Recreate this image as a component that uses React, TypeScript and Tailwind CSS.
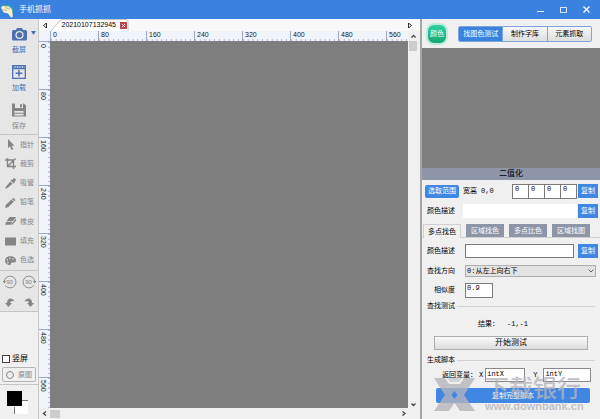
import { clsx } from "clsx";
import type { ReactNode } from "react";

const MARKS = [0, 80, 160, 240, 320, 400, 480, 560];

const TOOLS: { label: string; icon: ReactNode }[] = [
  { label: "指针", icon: <path d="M3 0v9.2l2.1-1.9L6.6 11l1.7-.8-1.6-3.5H9.5z" /> },
  {
    label: "裁剪",
    icon: <path d="M0 2h8.500v9M2.500 0v8.500H11M2.500 8.500 10.500.5" fill="none" stroke="currentColor" strokeWidth="1.400" />,
  },
  { label: "吸管", icon: <path d="M8.4.6a1.5 1.5 0 0 1 2.1 2.1L9.2 4l.5.6-1 1L5.5 2.5l1-1 .6.5zM5.3 3.6l2.3 2.2L2.4 10 .3 11l.8-2.4z" /> },
  { label: "铅笔", icon: <path d="M8.2.8 10.6 3 9.4 4.2 7 1.9zM6.4 2.5 8.8 4.8 3 10.3.2 11 .8 8z" /> },
  { label: "橡皮", icon: <path d="M4.600 1H11L8 5H1.500zM1.200 5.700h6.500L5.800 8.700H0zM11 2.200v2.600L6.700 9.500V7.900z" /> },
  { label: "填充", icon: <path d="M0 1.500h11v8H0z" /> },
  {
    label: "色选",
    icon: (
      <path
        fillRule="evenodd"
        d="M5.5 1.3C2.3 1.3 0 3.200 0 5.700s2.200 4.200 4.800 4.200c1.700 0 .6-1.700 1.900-2.200 1.200-.5 4.300.6 4.300-2.200 0-2.500-2.400-4.200-5.500-4.200zM2.400 4.200a.8.8 0 1 1 0 1.600.8.8 0 0 1 0-1.600zM5 2.500a.8.8 0 1 1 0 1.600.8.8 0 0 1 0-1.600zM8 3.200a.8.8 0 1 1 0 1.600.8.8 0 0 1 0-1.600zM2.900 7a.8.8 0 1 1 0 1.600.8.8 0 0 1 0-1.600z"
      />
    ),
  },
];

const MODES = ["找图色测试", "制作字库", "元素抓取"];
const TABS = ["多点找色", "区域找色", "多点比色", "区域找图"];

const MONO = "font-['Liberation_Mono','Noto_Sans_CJK_SC',monospace]";

function TitleBar() {
  return (
    <header className="flex h-[19px] shrink-0 items-center bg-[#3a82df] text-white">
      <svg className="ml-px h-4 w-3" viewBox="0 0 12 16">
        <path d="M1 3h8l3 3.500V12l-2 2z" fill="#3aa79c" />
        <path d="M0 5.500 1.500 4l6.500.5 3 3 .8 7.500-1.800.5L7 11.500l-4.500-1z" fill="#f7efd0" />
        <path d="M1.500 7.500 6 8.500M4.500 5.500 9 7.500" stroke="#a89a60" strokeWidth=".7" />
      </svg>
      <h1 className="ml-1.5 text-[8px] leading-3">手机抓抓</h1>
      <div className="ml-auto flex items-center gap-4 pr-2.5">
        <button aria-label="最小化" className="flex h-3 w-[7px] items-center">
          <span className="mt-1 h-px w-full bg-white" />
        </button>
        <button aria-label="最大化" className="h-1.5 w-[7px] border border-white/80" />
        <button aria-label="关闭" className="w-[7px]">
          <svg className="size-[7px]" viewBox="0 0 7 7" stroke="white" strokeWidth="1.300">
            <path d="m.5.5 6 6m0-6-6 6" />
          </svg>
        </button>
      </div>
    </header>
  );
}

function Sidebar() {
  return (
    <aside className="flex w-[39px] shrink-0 flex-col border-r border-[#c8c8c8] bg-[#f0f0f0] text-[7px] leading-[10px] text-[#858585]">
      <div className="flex h-[116px] flex-col gap-2.5 border-b border-[#c6c6c6] bg-[#e6e6e6] pt-2">
        <button className="relative flex flex-col items-center gap-1 text-[#4c70b2]">
          <svg className="h-[14px] w-[15px]" viewBox="0 0 15 14" fill="currentColor">
            <path
              fillRule="evenodd"
              d="M5 1h5l1 2h2.500q1.500 0 1.500 1.500V12q0 1.500-1.500 1.500h-12Q0 13.500 0 12V4.500Q0 3 1.500 3H4zM7.500 3.900a4.100 4.100 0 1 0 0 8.200 4.100 4.100 0 0 0 0-8.200zm0 1.300a2.800 2.800 0 1 1 0 5.600 2.800 2.800 0 0 1 0-5.600z"
            />
            <circle cx="7.500" cy="8" r="1.300" />
          </svg>
          截屏
          <svg className="absolute top-1 right-0.5 h-1 w-[5px]" viewBox="0 0 5 4" fill="currentColor">
            <path d="M0 0h5L2.500 4z" />
          </svg>
        </button>
        <button className="flex flex-col items-center gap-1 text-[#4c70b2]">
          <svg className="size-[14px]" viewBox="0 0 14 14" fill="none" stroke="currentColor">
            <path d="M.7.700h12.600v12.600H.7zM.7 3.500h12.600" strokeWidth="1.300" />
            <path d="M1 2h12" strokeWidth="1.500" strokeDasharray="1.500 1" />
            <path d="M7 5v6.500M3.700 8.300h6.600" strokeWidth="1.500" />
          </svg>
          加载
        </button>
        <button className="flex flex-col items-center gap-1">
          <svg className="size-[14px]" viewBox="0 0 14 14" fill="currentColor">
            <path fillRule="evenodd" d="M0 .5h12l2 2v11H0zM3 .5V5h8V.5zM2.500 8v4.500h9V8z" />
            <path d="M8 1.200h2v3H8zM2.500 9.700h9v1h-9z" />
          </svg>
          保存
        </button>
      </div>
      <div className="flex h-[136px] flex-col justify-around border-b border-[#c6c6c6] bg-[#e6e6e6]">
        {TOOLS.map((tool) => (
          <button key={tool.label} className="flex items-center gap-1 pl-[5px]">
            <svg className="size-[11px]" viewBox="0 0 11 11" fill="currentColor">
              {tool.icon}
            </svg>
            {tool.label}
          </button>
        ))}
      </div>
      <div className="grid h-[41px] grid-cols-2 place-items-center border-b border-[#c6c6c6] bg-[#e6e6e6]">
        {[false, true].map((right) => (
          <button
            key={String(right)}
            aria-label={right ? "右转" : "左转"}
            className="relative flex size-[14px] items-center justify-center text-[6px]"
          >
            90
            <svg
              className={clsx("absolute inset-0", right && "-scale-x-100")}
              viewBox="0 0 14 14"
              fill="none"
              stroke="currentColor"
            >
              <path d="M1.200 7A5.900 5.900 0 1 1 2.200 10.300" strokeWidth=".9" />
              <path d="M-.3 6h3.200L1.300 8.800z" fill="currentColor" stroke="none" />
            </svg>
          </button>
        ))}
        {[false, true].map((redo) => (
          <button key={String(redo)} aria-label={redo ? "重做" : "撤销"}>
            <svg
              className={clsx("h-[9px] w-[10px]", redo && "-scale-x-100")}
              viewBox="0 0 10 9"
              fill="currentColor"
            >
              <path d="M0 5 3.500 9 7 5H5Q5 2.500 9.500 3.200 8 .2 5 .5 2 1 2 5z" />
            </svg>
          </button>
        ))}
      </div>
      <div className="mt-auto flex flex-col gap-0.5 px-0.5 pb-0.5">
        <label className="flex items-center gap-0.5 text-[8px] leading-3 text-black">
          <input type="checkbox" className="size-2 appearance-none border border-[#444] bg-white" />
          竖屏
        </label>
        <button className="flex h-[15px] items-center justify-center gap-1 rounded-xs border border-[#b4b4b4]">
          <span className="size-2 rounded-full border border-[#8a8a8a]" />
          原图
        </button>
      </div>
      <div className="h-[35px] border-t border-[#c6c6c6] pt-1.5 pl-[7px]">
        <svg className="h-6 w-[22px]" viewBox="0 0 22 24">
          <path d="M8 9h13v14H8z" fill="white" />
          <path d="M15 9.500h6M7.500 16v7" stroke="#777" />
          <path d="M0 0h15v15H0z" />
        </svg>
      </div>
    </aside>
  );
}

function TopRuler() {
  return (
    <div className="flex h-2.5 overflow-hidden bg-[#f0f3fa] text-[7px] leading-[8px] text-[#222]">
      {MARKS.map((mark) => (
        <div key={mark} className="relative w-12 shrink-0 border-l border-[#9aa9c6] pl-0.5">
          {mark}
          <svg className="absolute bottom-0 left-0 h-0.5 w-12" viewBox="0 0 48 2" stroke="#9aa9c6">
            <path d="M0 1h48" strokeWidth="2" strokeDasharray=".8 4" />
          </svg>
        </div>
      ))}
    </div>
  );
}

function SideRuler() {
  return (
    <div className="flex w-[11px] shrink-0 flex-col overflow-hidden bg-[#f0f3fa] text-[7px] leading-[8px] text-[#222]">
      {MARKS.map((mark) => (
        <div key={mark} className="relative h-12 shrink-0 border-t border-[#9aa9c6] pt-0.5">
          <span className="block [writing-mode:vertical-rl]">{mark}</span>
          <svg className="absolute top-0 right-0 h-12 w-0.5" viewBox="0 0 2 48" stroke="#9aa9c6">
            <path d="M1 0v48" strokeWidth="2" strokeDasharray=".8 4" />
          </svg>
        </div>
      ))}
    </div>
  );
}

function Arrow({ d }: { d: string }) {
  return (
    <svg className="size-[5px]" viewBox="0 0 5 5" fill="none" stroke="#444" strokeWidth="1.300">
      <path d={d} />
    </svg>
  );
}

function Workspace() {
  return (
    <main className="flex min-w-0 flex-1 flex-col bg-[#f0f0f0]">
      <div className="flex h-3 shrink-0 items-center bg-[#f9f9f9] px-1">
        <button aria-label="上一个">
          <svg className="h-[5px] w-1" viewBox="0 0 4 5" fill="none" stroke="black">
            <path d="M3.500 0v5L.5 2.500z" strokeWidth=".8" />
          </svg>
        </button>
        <div className="relative ml-1 flex h-3 w-[78px] items-center justify-end gap-1 pr-0.5 text-[7px] leading-[10px] text-black">
          <svg className="absolute inset-0 h-3 w-[78px]" viewBox="0 0 78 12" fill="white" stroke="#c4c4c4">
            <path d="M0 12 9 1.500Q10 .5 11 .5h64q2 0 2 2V12" />
          </svg>
          <span className="relative">20210107132945</span>
          <button aria-label="关闭标签" className="relative flex size-[7px] items-center justify-center bg-[#c0444b]">
            <svg className="size-[3px]" viewBox="0 0 3 3" stroke="white">
              <path d="m0 0 3 3m0-3L0 3" strokeWidth=".8" />
            </svg>
          </button>
        </div>
        <button aria-label="下一个" className="mr-1 ml-auto">
          <svg className="h-[5px] w-1" viewBox="0 0 4 5" fill="none" stroke="black">
            <path d="M.5 0v5l3-2.500z" strokeWidth=".8" />
          </svg>
        </button>
      </div>
      <div className="flex min-h-0 flex-1">
        <div className="flex flex-col">
          <div className="h-2.5 w-[11px] bg-[#f0f3fa]" />
          <div className="flex min-h-0 flex-1">
            <SideRuler />
          </div>
          <div className="flex h-[11px] items-center justify-center">
            <Arrow d="M4 .5 1.500 2.500 4 4.500" />
          </div>
        </div>
        <div className="flex min-w-0 flex-1 flex-col">
          <TopRuler />
          <div className="min-h-0 flex-1 bg-[#7e7e7e]" />
          <div className="flex h-[11px] items-center">
            <div className="h-2 w-2.5 bg-[#cdcdcd]" />
            <span className="mr-0.5 ml-auto">
              <Arrow d="M1.500.5 4 2.500 1.500 4.500" />
            </span>
          </div>
        </div>
        <div className="flex w-3 shrink-0 flex-col items-center pr-0.5 pb-3">
          <div className="flex h-2.5 items-center">
            <Arrow d="M.5 3.500 2.500 1.500 4.500 3.500" />
          </div>
          <div className="h-2.5 w-2 bg-[#cdcdcd]" />
          <span className="mt-auto">
            <Arrow d="M.5 1.500 2.500 3.500 4.500 1.500" />
          </span>
        </div>
      </div>
    </main>
  );
}

function CopyButton() {
  return <button className="h-[14px] w-5 shrink-0 bg-[#3f87e3] text-white">复制</button>;
}

function SectionTitle({ children }: { children: ReactNode }) {
  return (
    <h2 className="flex h-3 shrink-0 items-center gap-0.5 px-[5px]">
      {children}
      <span className="h-px flex-1 bg-[#d2d2d2]" />
    </h2>
  );
}

function Watermark() {
  return (
    <div className="pointer-events-none absolute bottom-2 left-3 flex items-center gap-2.5 text-[#b4b4ba]/80">
      <svg className="h-[33px] w-[41px]" viewBox="0 0 41 33" fill="currentColor">
        <path
          fillRule="evenodd"
          d="M0 0h11l4 6h11l4-6h11L30 17l11 16H26l-5.500-8-5.500 8H0l11-16zM20.500 13 17.500 17l3 4 3-4z"
        />
        <path d="M13 0h15l-3 4h-9z" opacity=".6" />
      </svg>
      <div>
        <div className="text-[24px] leading-6 font-medium">下载银行</div>
        <div className="text-[11px] leading-[10px] font-bold">www.downbank.cn</div>
      </div>
    </div>
  );
}

function Panel() {
  return (
    <section className="relative flex w-[180px] shrink-0 flex-col border-l-2 border-[#a5a5a5] bg-[#f0f0f0] text-[7px] leading-[10px] text-black">
      <div className="flex h-[29px] shrink-0 items-center gap-2.5 pr-2 pl-1">
        <button className="size-[22px] shrink-0 rounded-lg border-2 border-[#bdebd9] bg-linear-to-b from-[#2fd0a0] to-[#17a673] text-white">
          颜色
        </button>
        <div className="flex h-4 flex-1 overflow-hidden rounded-xs border border-[#7da5dc] text-[7px]">
          {MODES.map((mode, i) => (
            <button
              key={mode}
              className={clsx(
                "flex-1 whitespace-nowrap",
                i === 0 ? "bg-[#3a82df] text-white" : "border-l border-[#7da5dc] bg-linear-to-b from-[#f8f8f8] to-[#dedede]"
              )}
            >
              {mode}
            </button>
          ))}
        </div>
      </div>
      <div className="min-h-0 flex-1 bg-[#7e7e7e]" />
      <div className="h-3 shrink-0 bg-[#8e95a6] text-center text-[8px] leading-3">二值化</div>

      <div className="flex h-[22px] shrink-0 items-center pr-0.5 pl-[3px]">
        <button className="h-[13px] w-[34px] rounded-xs bg-[#3f87e3] text-white">选取范围</button>
        <span className="ml-1">宽高</span>
        <span className={clsx("ml-1", MONO)}>0,0</span>
        <div className="mr-px ml-auto flex">
          {["左", "上", "右", "下"].map((side) => (
            <input
              key={side}
              aria-label={side}
              defaultValue="0"
              className={clsx("-ml-px h-[15px] w-[17px] border border-[#7a7a7a] bg-white pb-1 pl-0.5", MONO)}
            />
          ))}
        </div>
        <CopyButton />
      </div>
      <div className="flex h-[18px] shrink-0 items-center pr-0.5 pl-[5px]">
        <label htmlFor="desc">颜色描述</label>
        <input id="desc" className="mr-px ml-2 h-[14px] min-w-0 flex-1 bg-white" />
        <CopyButton />
      </div>
      <div className="flex h-[18px] shrink-0 items-end gap-[5px] border-b border-[#cfcfcf] pl-px">
        {TABS.map((tab, i) => (
          <button
            key={tab}
            className={clsx(
              i === 0
                ? "-mb-px h-[14px] w-[38px] border border-b-0 border-[#cfcfcf] bg-[#f0f0f0]"
                : "h-[13px] w-[38px] bg-[#8e95a6] text-white"
            )}
          >
            {tab}
          </button>
        ))}
      </div>
      <div className="flex h-6 shrink-0 items-center pt-0.5 pr-0.5 pl-[5px]">
        <label htmlFor="points">颜色描述</label>
        <input id="points" className="mr-1 ml-2.5 h-[14px] min-w-0 flex-1 border border-[#7a7a7a] bg-white" />
        <CopyButton />
      </div>
      <div className="flex h-[18px] shrink-0 items-center pr-1 pl-[5px]">
        <label htmlFor="direction">查找方向</label>
        <div className="relative ml-2.5 flex-1">
          <select
            id="direction"
            className={clsx(
              "block h-3 w-full appearance-none border border-[#adadad] bg-[#e3e3e3] pl-px text-[7px] leading-[10px]",
              MONO
            )}
          >
            <option>0:从左上向右下</option>
          </select>
          <svg className="pointer-events-none absolute top-1 right-0.5 h-1 w-1.5" viewBox="0 0 6 4" fill="none" stroke="#555">
            <path d="m.5.5 2.500 2.500L5.500.5" strokeWidth=".9" />
          </svg>
        </div>
      </div>
      <div className="flex h-5 shrink-0 items-center pl-3">
        <label htmlFor="similar">相似度</label>
        <input
          id="similar"
          defaultValue="0.9"
          className={clsx("ml-2.5 h-[15px] w-7 border border-[#7a7a7a] bg-white pb-1 pl-px", MONO)}
        />
      </div>
      <SectionTitle>查找测试</SectionTitle>
      <div className="flex h-6 shrink-0 items-center gap-2 pl-14">
        <span>结果：</span>
        <span className={MONO}>-1,-1</span>
      </div>
      <button className="mx-3 h-[14px] shrink-0 border border-[#adadad] bg-linear-to-b from-[#fafafa] to-[#dcdcdc] text-[8px]">
        开始测试
      </button>
      <div className="h-1 shrink-0" />
      <SectionTitle>生成脚本</SectionTitle>
      <div className={clsx("flex h-[18px] shrink-0 items-center pl-5", MONO)}>
        <span>返回变量：</span>
        <label htmlFor="varx" className="ml-0.5">X</label>
        <input id="varx" defaultValue="intX" className="ml-0.5 h-[14px] w-10 border border-[#8a8a8a] bg-white px-px pb-0.5" />
        <label htmlFor="vary" className="ml-2">Y</label>
        <input id="vary" defaultValue="intY" className="ml-1.5 h-[14px] w-12 border border-[#8a8a8a] bg-white px-px pb-0.5" />
      </div>
      <button className="mt-1 mr-2.5 mb-4 ml-3.5 h-[15px] shrink-0 rounded-xs bg-[#3f87e3] text-[7px] text-white">
        复制完整脚本
      </button>
      <Watermark />
    </section>
  );
}

export default function App() {
  return (
    <div className="flex h-screen flex-col overflow-hidden font-['Liberation_Sans','Noto_Sans_CJK_SC',sans-serif]">
      <TitleBar />
      <div className="flex min-h-0 flex-1">
        <Sidebar />
        <Workspace />
        <Panel />
      </div>
    </div>
  );
}
